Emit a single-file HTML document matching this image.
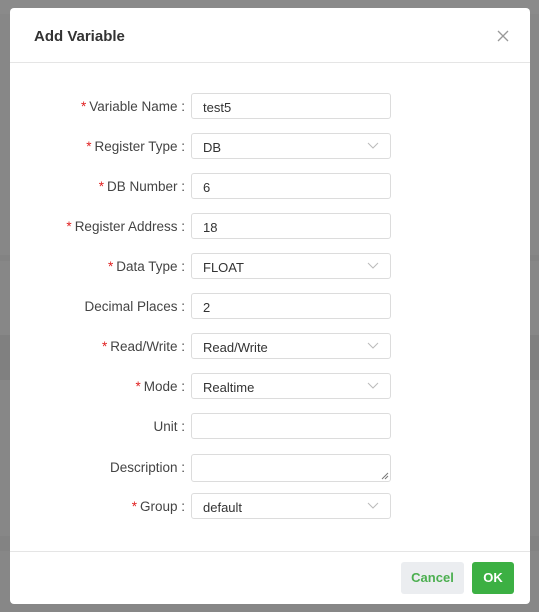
<!DOCTYPE html>
<html><head><style>
*{box-sizing:border-box;margin:0;padding:0}
body{width:539px;height:612px;background:#878787;font-family:"Liberation Sans",sans-serif;position:relative;overflow:hidden}
.bg1{position:absolute;left:0;top:0;width:539px;height:14px;background:#8a8a8a}
.band{position:absolute;left:0;width:539px;background:#838383}
.dlg{position:absolute;left:10px;top:8px;width:520px;height:596px;background:#fff;border-radius:4px}
.title{position:absolute;left:24px;top:20px;font-size:15px;font-weight:bold;color:#333}
.close{position:absolute;left:487px;top:22px}
.hl{position:absolute;left:0;top:54px;width:520px;height:1px;background:#e5e5e5}
.fl{position:absolute;left:0;top:543px;width:520px;height:1px;background:#e5e5e5}
.row{position:absolute;left:0;width:520px;height:26px}
.lbl{position:absolute;right:345px;top:6px;font-size:13.5px;color:#444;white-space:nowrap}
.lbl b{color:#e02020;font-weight:normal;margin-right:3px}
.in{position:absolute;left:181px;top:0;width:200px;height:26px;border:1px solid #dcdcdc;border-radius:3px;font-size:13px;color:#333;padding:6px 11px}
.arr{position:absolute;right:11px;top:8px}
.btn{position:absolute;top:554px;height:32px;border-radius:3px;font-size:13px;font-weight:bold;text-align:center;line-height:32px}
</style></head><body>
<div class="bg1"></div>
<div class="band" style="top:255px;height:6px"></div>
<div class="band" style="top:335px;height:45px;background:#808080"></div>
<div class="band" style="top:536px;height:15px"></div>
<div class="dlg">
<div class="title">Add Variable</div>
<svg class="close" width="12" height="12" viewBox="0 0 12 12"><path d="M1 1L11 11M11 1L1 11" stroke="#999" stroke-width="1.3"/></svg>
<div class="hl"></div>

<div class="row" style="top:85px"><div class="lbl"><b>*</b>Variable Name :</div><div class="in">test5</div></div>
<div class="row" style="top:125px"><div class="lbl"><b>*</b>Register Type :</div><div class="in">DB<svg class="arr" width="12" height="8" viewBox="0 0 12 8"><path d="M1 1L6 6L11 1" fill="none" stroke="#bbb"/></svg></div></div>
<div class="row" style="top:165px"><div class="lbl"><b>*</b>DB Number :</div><div class="in">6</div></div>
<div class="row" style="top:205px"><div class="lbl"><b>*</b>Register Address :</div><div class="in">18</div></div>
<div class="row" style="top:245px"><div class="lbl"><b>*</b>Data Type :</div><div class="in">FLOAT<svg class="arr" width="12" height="8" viewBox="0 0 12 8"><path d="M1 1L6 6L11 1" fill="none" stroke="#bbb"/></svg></div></div>
<div class="row" style="top:285px"><div class="lbl">Decimal Places :</div><div class="in">2</div></div>
<div class="row" style="top:325px"><div class="lbl"><b>*</b>Read/Write :</div><div class="in">Read/Write<svg class="arr" width="12" height="8" viewBox="0 0 12 8"><path d="M1 1L6 6L11 1" fill="none" stroke="#bbb"/></svg></div></div>
<div class="row" style="top:365px"><div class="lbl"><b>*</b>Mode :</div><div class="in">Realtime<svg class="arr" width="12" height="8" viewBox="0 0 12 8"><path d="M1 1L6 6L11 1" fill="none" stroke="#bbb"/></svg></div></div>
<div class="row" style="top:405px"><div class="lbl">Unit :</div><div class="in"></div></div>
<div class="row" style="top:446px;height:28px"><div class="lbl">Description :</div><div class="in" style="height:28px"><svg style="position:absolute;right:1px;bottom:1px" width="8" height="8" viewBox="0 0 8 8"><path d="M7 1L1 7M7 4L4 7" stroke="#777"/></svg></div></div>
<div class="row" style="top:485px"><div class="lbl"><b>*</b>Group :</div><div class="in">default<svg class="arr" width="12" height="8" viewBox="0 0 12 8"><path d="M1 1L6 6L11 1" fill="none" stroke="#bbb"/></svg></div></div>

<div class="fl"></div>
<div class="btn" style="left:391px;width:63px;background:#ebedf0;color:#4caf50">Cancel</div>
<div class="btn" style="left:462px;width:42px;background:#3cb043;color:#fff">OK</div>
</div>
</body></html>
